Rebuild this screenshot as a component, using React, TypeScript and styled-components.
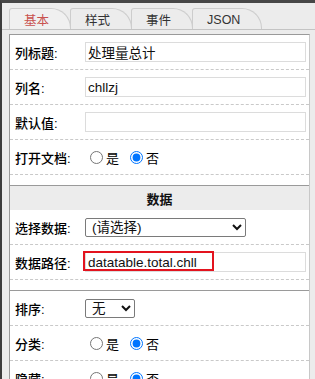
import React from "react";
import styled, { createGlobalStyle } from "styled-components";

const GlobalStyle = createGlobalStyle`
  html, body {
    margin: 0;
    padding: 0;
    overflow: hidden;
    background: #ececec;
  }
  * {
    box-sizing: border-box;
  }
`;

const FONT = `"Liberation Sans", "Noto Sans CJK SC", sans-serif`;

const Frame = styled.div`
  height: 379px;
  border-top: 3px solid #474747;
  border-left: 2px solid #3d3d3d;
  padding: 0 5px 0 7px;
  font-family: ${FONT};
  color: #1c1c1c;
  overflow: hidden;
`;

const TabBar = styled.div`
  display: flex;
  height: 27px;
  padding-top: 5px;
  margin: 0 -5px 4px -7px;
  padding-left: 7px;
  border-bottom: 1px solid #c4c4c4;
`;

const Tab = styled.div<{ $active?: boolean }>`
  display: flex;
  align-items: center;
  height: 21px;
  padding: 1px 21px 0 14px;
  font-size: 12.5px;
  color: ${(p) => (p.$active ? "#c9524f" : "#333")};
  background: ${(p) => (p.$active ? "#f0f0f0" : "#ececec")};
  border: 1px solid #cdcdcd;
  border-bottom: none;
  border-radius: 3px 20px 0 0;
  & + & {
    margin-left: -1px;
  }
`;

const Panel = styled.div`
  background: #fff;
  border-top: 1px solid #9a9a9a;
  border-left: 1px solid #9a9a9a;
  border-right: 1px solid #c8c8c8;
  min-height: 400px;
`;

const Section = styled.div`
  padding-bottom: 10px;
  & + & {
    border-top: 1px solid #9a9a9a;
  }
`;

const SectionTitle = styled.div`
  height: 24px;
  background: #ececec;
  display: flex;
  align-items: center;
  justify-content: center;
  font-size: 13px;
  font-weight: bold;
  color: #111;
`;

const Row = styled.div`
  display: flex;
  align-items: center;
  height: 35px;
  padding: 0 3px 0 5px;
  border-bottom: 1px dashed #c9c9c9;
`;

const Label = styled.div`
  width: 70px;
  flex: none;
  font-size: 13px;
  font-weight: 500;
  color: #000;
`;

const Field = styled.div`
  position: relative;
  flex: 1;
  display: flex;
  align-items: center;
`;

const TextInput = styled.input`
  width: 100%;
  height: 20px;
  border: 1px solid #dcdcdc;
  padding: 0 2px;
  font-family: ${FONT};
  font-size: 13.5px;
  color: #111;
  outline: none;
`;

const Highlight = styled.div`
  position: absolute;
  left: -2px;
  top: -1px;
  width: 131px;
  height: 20px;
  border: 2px solid #e3131e;
  pointer-events: none;
`;

const Select = styled.select<{ $w: number }>`
  width: ${(p) => p.$w}px;
  height: 19px;
  border: 1px solid #7a7a7a;
  border-radius: 2px;
  background: #fff;
  font-family: ${FONT};
  font-size: 13.5px;
  color: #111;
  padding: 0 0 0 2px;
`;

const RadioGroup = styled.div`
  display: flex;
  align-items: center;
  font-size: 13px;
  color: #000;
`;

const RadioItem = styled.label`
  display: flex;
  align-items: center;
  margin-right: 6px;
  input {
    width: 13px;
    height: 13px;
    margin: 0 3px 0 5px;
    accent-color: #0075ff;
  }
`;

function YesNo({ name }: { name: string }) {
  return (
    <RadioGroup>
      <RadioItem>
        <input type="radio" name={name} />是
      </RadioItem>
      <RadioItem>
        <input type="radio" name={name} defaultChecked />否
      </RadioItem>
    </RadioGroup>
  );
}

export default function App() {
  return (
    <Frame>
      <GlobalStyle />
      <TabBar>
        <Tab $active>基本</Tab>
        <Tab>样式</Tab>
        <Tab>事件</Tab>
        <Tab>JSON</Tab>
      </TabBar>
      <Panel>
        <Section>
          <Row>
            <Label>列标题:</Label>
            <Field>
              <TextInput defaultValue="处理量总计" />
            </Field>
          </Row>
          <Row>
            <Label>列名:</Label>
            <Field>
              <TextInput defaultValue="chllzj" />
            </Field>
          </Row>
          <Row>
            <Label>默认值:</Label>
            <Field>
              <TextInput defaultValue="" />
            </Field>
          </Row>
          <Row>
            <Label>打开文档:</Label>
            <YesNo name="doc" />
          </Row>
        </Section>
        <Section>
          <SectionTitle>数据</SectionTitle>
          <Row>
            <Label>选择数据:</Label>
            <Field>
              <Select $w={161}>
                <option>(请选择)</option>
              </Select>
            </Field>
          </Row>
          <Row>
            <Label>数据路径:</Label>
            <Field>
              <TextInput defaultValue="datatable.total.chll" />
              <Highlight />
            </Field>
          </Row>
        </Section>
        <Section>
          <Row>
            <Label>排序:</Label>
            <Field>
              <Select $w={50}>
                <option>无</option>
              </Select>
            </Field>
          </Row>
          <Row>
            <Label>分类:</Label>
            <YesNo name="cat" />
          </Row>
          <Row>
            <Label>隐藏:</Label>
            <YesNo name="hide" />
          </Row>
        </Section>
      </Panel>
    </Frame>
  );
}
